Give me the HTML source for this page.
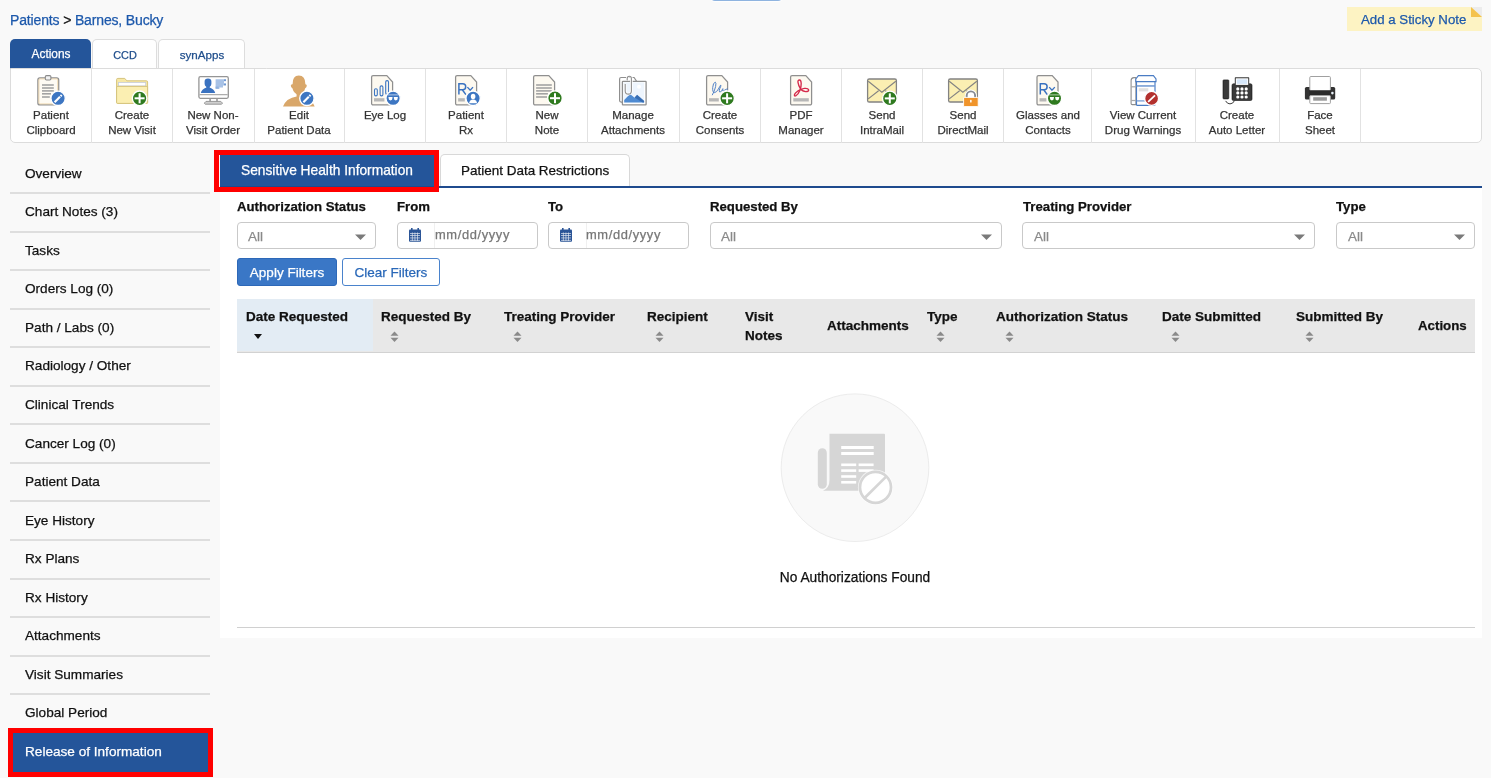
<!DOCTYPE html>
<html><head><meta charset="utf-8"><title>Release of Information</title>
<style>
*{margin:0;padding:0;box-sizing:border-box}
html,body{width:1491px;height:778px;overflow:hidden}
body{background:#f9f9f9;font-family:"Liberation Sans",sans-serif;position:relative;color:#000}
.a{position:absolute}
.t{position:absolute;white-space:nowrap;line-height:1;will-change:transform;-webkit-text-stroke:0.25px currentColor}
</style></head><body>
<div class="a" style="left:709.5px;top:-4px;width:73.0px;height:5.2px;background:#8fb4e0;border-radius:0 0 5px 5px;box-shadow:0 1px 1.5px #fff"></div>
<div class="t" style="left:9.8px;top:13.25px;font-size:14px;letter-spacing:-0.15px;color:#1c58ab">Patients <span style="color:#111">&gt;</span> Barnes, Bucky</div>
<div class="a" style="left:1346.5px;top:7px;width:135.5px;height:24.3px;background:#fdf3c3"></div>
<svg class="a" style="left:1471px;top:7px" width="11" height="10"><polygon points="0,0 11,0 11,10" fill="#ececec"/><polygon points="0,0 11,10 0,10" fill="#f4c24c"/></svg>
<div class="t " style="left:1361.00px;top:12.59px;font-size:13.25px;color:#1c58ab;">Add a Sticky Note</div>
<div class="a" style="left:10px;top:39px;width:81px;height:29.799999999999997px;background:#24559a;border-radius:5px 5px 0 0"></div>
<div class="t" style="left:-99.50px;width:300px;text-align:center;top:48.93px;font-size:11.9px;color:#fff;">Actions</div>
<div class="a" style="left:92px;top:39px;width:64.5px;height:30px;background:#fff;border:1px solid #ddd;border-bottom:none;border-radius:5px 5px 0 0"></div>
<div class="t" style="left:-25.30px;width:300px;text-align:center;top:50.07px;font-size:10.9px;color:#1f4e8c;">CCD</div>
<div class="a" style="left:158px;top:39px;width:86.5px;height:30px;background:#fff;border:1px solid #ddd;border-bottom:none;border-radius:5px 5px 0 0"></div>
<div class="t" style="left:51.50px;width:300px;text-align:center;top:49.18px;font-size:11.6px;color:#1f4e8c;">synApps</div>
<div class="a" style="left:10px;top:67.9px;width:1471.5px;height:75.6px;background:#fff;border:1px solid #dcdcdc;border-radius:0 5px 5px 5px"></div>
<div class="a" style="left:91.0px;top:69px;width:1.0px;height:74px;background:#e2e2e2"></div>
<div class="a" style="left:172.0px;top:69px;width:1.0px;height:74px;background:#e2e2e2"></div>
<div class="a" style="left:253.5px;top:69px;width:1.0px;height:74px;background:#e2e2e2"></div>
<div class="a" style="left:344.1px;top:69px;width:1.0px;height:74px;background:#e2e2e2"></div>
<div class="a" style="left:425.0px;top:69px;width:1.0px;height:74px;background:#e2e2e2"></div>
<div class="a" style="left:506.0px;top:69px;width:1.0px;height:74px;background:#e2e2e2"></div>
<div class="a" style="left:587.0px;top:69px;width:1.0px;height:74px;background:#e2e2e2"></div>
<div class="a" style="left:678.9px;top:69px;width:1.0px;height:74px;background:#e2e2e2"></div>
<div class="a" style="left:759.9px;top:69px;width:1.0px;height:74px;background:#e2e2e2"></div>
<div class="a" style="left:841.0px;top:69px;width:1.0px;height:74px;background:#e2e2e2"></div>
<div class="a" style="left:922.0px;top:69px;width:1.0px;height:74px;background:#e2e2e2"></div>
<div class="a" style="left:1003.0px;top:69px;width:1.0px;height:74px;background:#e2e2e2"></div>
<div class="a" style="left:1091.0px;top:69px;width:1.0px;height:74px;background:#e2e2e2"></div>
<div class="a" style="left:1194.5px;top:69px;width:1.0px;height:74px;background:#e2e2e2"></div>
<div class="a" style="left:1278.8px;top:69px;width:1.0px;height:74px;background:#e2e2e2"></div>
<div class="a" style="left:1359.9px;top:69px;width:1.0px;height:74px;background:#e2e2e2"></div>
<div class="t" style="left:-99.25px;width:300px;text-align:center;top:109.87px;font-size:11.5px;color:#333;">Patient</div>
<div class="t" style="left:-99.25px;width:300px;text-align:center;top:124.97px;font-size:11.5px;color:#333;">Clipboard</div>
<div class="t" style="left:-18.00px;width:300px;text-align:center;top:109.87px;font-size:11.5px;color:#333;">Create</div>
<div class="t" style="left:-18.00px;width:300px;text-align:center;top:124.97px;font-size:11.5px;color:#333;">New Visit</div>
<div class="t" style="left:63.25px;width:300px;text-align:center;top:109.87px;font-size:11.5px;color:#333;">New Non-</div>
<div class="t" style="left:63.25px;width:300px;text-align:center;top:124.97px;font-size:11.5px;color:#333;">Visit Order</div>
<div class="t" style="left:149.30px;width:300px;text-align:center;top:109.87px;font-size:11.5px;color:#333;">Edit</div>
<div class="t" style="left:149.30px;width:300px;text-align:center;top:124.97px;font-size:11.5px;color:#333;">Patient Data</div>
<div class="t" style="left:235.05px;width:300px;text-align:center;top:109.87px;font-size:11.5px;color:#333;">Eye Log</div>
<div class="t" style="left:316.00px;width:300px;text-align:center;top:109.87px;font-size:11.5px;color:#333;">Patient</div>
<div class="t" style="left:316.00px;width:300px;text-align:center;top:124.97px;font-size:11.5px;color:#333;">Rx</div>
<div class="t" style="left:397.00px;width:300px;text-align:center;top:109.87px;font-size:11.5px;color:#333;">New</div>
<div class="t" style="left:397.00px;width:300px;text-align:center;top:124.97px;font-size:11.5px;color:#333;">Note</div>
<div class="t" style="left:483.45px;width:300px;text-align:center;top:109.87px;font-size:11.5px;color:#333;">Manage</div>
<div class="t" style="left:483.45px;width:300px;text-align:center;top:124.97px;font-size:11.5px;color:#333;">Attachments</div>
<div class="t" style="left:569.90px;width:300px;text-align:center;top:109.87px;font-size:11.5px;color:#333;">Create</div>
<div class="t" style="left:569.90px;width:300px;text-align:center;top:124.97px;font-size:11.5px;color:#333;">Consents</div>
<div class="t" style="left:650.95px;width:300px;text-align:center;top:109.87px;font-size:11.5px;color:#333;">PDF</div>
<div class="t" style="left:650.95px;width:300px;text-align:center;top:124.97px;font-size:11.5px;color:#333;">Manager</div>
<div class="t" style="left:732.00px;width:300px;text-align:center;top:109.87px;font-size:11.5px;color:#333;">Send</div>
<div class="t" style="left:732.00px;width:300px;text-align:center;top:124.97px;font-size:11.5px;color:#333;">IntraMail</div>
<div class="t" style="left:813.00px;width:300px;text-align:center;top:109.87px;font-size:11.5px;color:#333;">Send</div>
<div class="t" style="left:813.00px;width:300px;text-align:center;top:124.97px;font-size:11.5px;color:#333;">DirectMail</div>
<div class="t" style="left:897.50px;width:300px;text-align:center;top:109.87px;font-size:11.5px;color:#333;">Glasses and</div>
<div class="t" style="left:897.50px;width:300px;text-align:center;top:124.97px;font-size:11.5px;color:#333;">Contacts</div>
<div class="t" style="left:993.25px;width:300px;text-align:center;top:109.87px;font-size:11.5px;color:#333;">View Current</div>
<div class="t" style="left:993.25px;width:300px;text-align:center;top:124.97px;font-size:11.5px;color:#333;">Drug Warnings</div>
<div class="t" style="left:1087.15px;width:300px;text-align:center;top:109.87px;font-size:11.5px;color:#333;">Create</div>
<div class="t" style="left:1087.15px;width:300px;text-align:center;top:124.97px;font-size:11.5px;color:#333;">Auto Letter</div>
<div class="t" style="left:1169.85px;width:300px;text-align:center;top:109.87px;font-size:11.5px;color:#333;">Face</div>
<div class="t" style="left:1169.85px;width:300px;text-align:center;top:124.97px;font-size:11.5px;color:#333;">Sheet</div>
<div class="a" style="left:10px;top:192.0px;width:200px;height:2.0px;background:#dedede"></div>
<div class="t " style="left:25.00px;top:166.59px;font-size:13.6px;color:#111;">Overview</div>
<div class="a" style="left:10px;top:230.56px;width:200px;height:2.0px;background:#dedede"></div>
<div class="t " style="left:25.00px;top:205.15px;font-size:13.6px;color:#111;">Chart Notes (3)</div>
<div class="a" style="left:10px;top:269.12px;width:200px;height:2.0px;background:#dedede"></div>
<div class="t " style="left:25.00px;top:243.71px;font-size:13.6px;color:#111;">Tasks</div>
<div class="a" style="left:10px;top:307.68px;width:200px;height:2.0px;background:#dedede"></div>
<div class="t " style="left:25.00px;top:282.27px;font-size:13.6px;color:#111;">Orders Log (0)</div>
<div class="a" style="left:10px;top:346.24px;width:200px;height:2.0px;background:#dedede"></div>
<div class="t " style="left:25.00px;top:320.83px;font-size:13.6px;color:#111;">Path / Labs (0)</div>
<div class="a" style="left:10px;top:384.8px;width:200px;height:2.0px;background:#dedede"></div>
<div class="t " style="left:25.00px;top:359.39px;font-size:13.6px;color:#111;">Radiology / Other</div>
<div class="a" style="left:10px;top:423.36px;width:200px;height:2.0px;background:#dedede"></div>
<div class="t " style="left:25.00px;top:397.95px;font-size:13.6px;color:#111;">Clinical Trends</div>
<div class="a" style="left:10px;top:461.92px;width:200px;height:2.0px;background:#dedede"></div>
<div class="t " style="left:25.00px;top:436.51px;font-size:13.6px;color:#111;">Cancer Log (0)</div>
<div class="a" style="left:10px;top:500.48px;width:200px;height:2.0px;background:#dedede"></div>
<div class="t " style="left:25.00px;top:475.07px;font-size:13.6px;color:#111;">Patient Data</div>
<div class="a" style="left:10px;top:539.04px;width:200px;height:2.0px;background:#dedede"></div>
<div class="t " style="left:25.00px;top:513.63px;font-size:13.6px;color:#111;">Eye History</div>
<div class="a" style="left:10px;top:577.6px;width:200px;height:2.0px;background:#dedede"></div>
<div class="t " style="left:25.00px;top:552.19px;font-size:13.6px;color:#111;">Rx Plans</div>
<div class="a" style="left:10px;top:616.16px;width:200px;height:2.0px;background:#dedede"></div>
<div class="t " style="left:25.00px;top:590.75px;font-size:13.6px;color:#111;">Rx History</div>
<div class="a" style="left:10px;top:654.72px;width:200px;height:2.0px;background:#dedede"></div>
<div class="t " style="left:25.00px;top:629.31px;font-size:13.6px;color:#111;">Attachments</div>
<div class="a" style="left:10px;top:693.28px;width:200px;height:2.0px;background:#dedede"></div>
<div class="t " style="left:25.00px;top:667.87px;font-size:13.6px;color:#111;">Visit Summaries</div>
<div class="a" style="left:10px;top:731.84px;width:200px;height:2.0px;background:#dedede"></div>
<div class="t " style="left:25.00px;top:706.43px;font-size:13.6px;color:#111;">Global Period</div>
<div class="a" style="left:10px;top:732.8px;width:200px;height:39.0px;background:#24559a"></div>
<div class="t " style="left:25.00px;top:744.99px;font-size:13.6px;color:#fff;">Release of Information</div>
<div class="a" style="left:7.7px;top:727.5px;width:204.9px;height:49.799999999999955px;border:5px solid #f00"></div>
<div class="a" style="left:220px;top:186.5px;width:1262px;height:451.5px;background:#fff"></div>
<div class="a" style="left:220px;top:155.4px;width:214.5px;height:31.599999999999994px;background:#24559a"></div>
<div class="t " style="left:241.00px;top:164.06px;font-size:13.75px;color:#fff;">Sensitive Health Information</div>
<div class="a" style="left:440px;top:154.3px;width:190px;height:32.69999999999999px;background:#fff;border:1px solid #d8d8d8;border-bottom:none;border-radius:5px 5px 0 0"></div>
<div class="t " style="left:460.50px;top:163.89px;font-size:13.48px;color:#111;">Patient Data Restrictions</div>
<div class="a" style="left:220px;top:185.5px;width:1262px;height:2.0px;background:#1f4b8e"></div>
<div class="a" style="left:214.4px;top:150.4px;width:224.9px;height:41.900000000000006px;border:5px solid #f00"></div>
<div class="t " style="left:237.00px;top:200.23px;font-size:13.2px;color:#111;font-weight:bold;">Authorization Status</div>
<div class="t " style="left:397.00px;top:200.23px;font-size:13.2px;color:#111;font-weight:bold;">From</div>
<div class="t " style="left:548.00px;top:200.23px;font-size:13.2px;color:#111;font-weight:bold;">To</div>
<div class="t " style="left:710.00px;top:200.23px;font-size:13.2px;color:#111;font-weight:bold;">Requested By</div>
<div class="t " style="left:1023.00px;top:200.23px;font-size:13.2px;color:#111;font-weight:bold;">Treating Provider</div>
<div class="t " style="left:1336.00px;top:200.23px;font-size:13.2px;color:#111;font-weight:bold;">Type</div>
<div class="a" style="left:237px;top:221.5px;width:139.3px;height:27.5px;background:#fff;border:1px solid #c9c9c9;border-radius:4px"></div>
<div class="t " style="left:248.30px;top:230.07px;font-size:13.5px;color:#8a8a8a;">All</div>
<svg class="a" style="left:355.3px;top:234px" width="11" height="6"><polygon points="0,0.5 11,0.5 5.5,6" fill="#7a7a7a"/></svg>
<div class="a" style="left:709.5px;top:221.5px;width:292.9px;height:27.5px;background:#fff;border:1px solid #c9c9c9;border-radius:4px"></div>
<div class="t " style="left:720.80px;top:230.07px;font-size:13.5px;color:#8a8a8a;">All</div>
<svg class="a" style="left:981.4px;top:234px" width="11" height="6"><polygon points="0,0.5 11,0.5 5.5,6" fill="#7a7a7a"/></svg>
<div class="a" style="left:1022.4px;top:221.5px;width:293.0000000000001px;height:27.5px;background:#fff;border:1px solid #c9c9c9;border-radius:4px"></div>
<div class="t " style="left:1033.70px;top:230.07px;font-size:13.5px;color:#8a8a8a;">All</div>
<svg class="a" style="left:1294.4px;top:234px" width="11" height="6"><polygon points="0,0.5 11,0.5 5.5,6" fill="#7a7a7a"/></svg>
<div class="a" style="left:1336.3px;top:221.5px;width:138.29999999999995px;height:27.5px;background:#fff;border:1px solid #c9c9c9;border-radius:4px"></div>
<div class="t " style="left:1347.60px;top:230.07px;font-size:13.5px;color:#8a8a8a;">All</div>
<svg class="a" style="left:1453.6px;top:234px" width="11" height="6"><polygon points="0,0.5 11,0.5 5.5,6" fill="#7a7a7a"/></svg>
<div class="a" style="left:397px;top:221.5px;width:140.89999999999998px;height:27.30000000000001px;background:#fff;border:1px solid #c9c9c9;border-radius:4px"></div>
<div class="a" style="left:434.3px;top:222.5px;width:1.0px;height:25.30000000000001px;background:#f0f0f0"></div>
<svg class="a" style="left:409px;top:228px" width="12" height="14" viewBox="0 0 12 14"><rect x="0" y="1.5" width="12" height="12.3" rx="1" fill="#2b5597"/><rect x="2" y="0" width="1.6" height="3" fill="#2b5597"/><rect x="8.4" y="0" width="1.6" height="3" fill="#2b5597"/><g fill="#fff" opacity="0.85"><rect x="1" y="5" width="10" height="0.7"/><rect x="1" y="7.3" width="10" height="0.7"/><rect x="1" y="9.6" width="10" height="0.7"/><rect x="1" y="11.9" width="10" height="0.7"/><rect x="2.9" y="4.5" width="0.7" height="8.5"/><rect x="5.6" y="4.5" width="0.7" height="8.5"/><rect x="8.3" y="4.5" width="0.7" height="8.5"/></g></svg>
<div class="t " style="left:435.00px;top:229.28px;font-size:12.9px;color:#777;letter-spacing:0.62px">mm/dd/yyyy</div>
<div class="a" style="left:548.2px;top:221.5px;width:141.0px;height:27.30000000000001px;background:#fff;border:1px solid #c9c9c9;border-radius:4px"></div>
<div class="a" style="left:585.5px;top:222.5px;width:1.0px;height:25.30000000000001px;background:#f0f0f0"></div>
<svg class="a" style="left:560.2px;top:228px" width="12" height="14" viewBox="0 0 12 14"><rect x="0" y="1.5" width="12" height="12.3" rx="1" fill="#2b5597"/><rect x="2" y="0" width="1.6" height="3" fill="#2b5597"/><rect x="8.4" y="0" width="1.6" height="3" fill="#2b5597"/><g fill="#fff" opacity="0.85"><rect x="1" y="5" width="10" height="0.7"/><rect x="1" y="7.3" width="10" height="0.7"/><rect x="1" y="9.6" width="10" height="0.7"/><rect x="1" y="11.9" width="10" height="0.7"/><rect x="2.9" y="4.5" width="0.7" height="8.5"/><rect x="5.6" y="4.5" width="0.7" height="8.5"/><rect x="8.3" y="4.5" width="0.7" height="8.5"/></g></svg>
<div class="t " style="left:586.20px;top:229.28px;font-size:12.9px;color:#777;letter-spacing:0.62px">mm/dd/yyyy</div>
<div class="a" style="left:237px;top:257.6px;width:100px;height:28.19999999999999px;background:#3a77c6;border:1px solid #2d68b8;border-radius:3px"></div>
<div class="t" style="left:137.00px;width:300px;text-align:center;top:265.77px;font-size:13.5px;color:#fff;">Apply Filters</div>
<div class="a" style="left:342.2px;top:257.6px;width:97.40000000000003px;height:28.19999999999999px;background:#fff;border:1.3px solid #4a83cc;border-radius:3px"></div>
<div class="t" style="left:241.00px;width:300px;text-align:center;top:265.77px;font-size:13.5px;color:#2a68b8;">Clear Filters</div>
<div class="a" style="left:237px;top:299px;width:1238px;height:54px;background:#e8e8e8;border-bottom:1.6px solid #d2d2d2"></div>
<div class="a" style="left:237px;top:299px;width:135.5px;height:52.39999999999998px;background:#e3ecf4"></div>
<div class="t " style="left:245.70px;top:310.37px;font-size:13.5px;color:#111;font-weight:bold;">Date Requested</div>
<div class="t " style="left:381.30px;top:310.37px;font-size:13.5px;color:#111;font-weight:bold;">Requested By</div>
<div class="t " style="left:504.00px;top:310.37px;font-size:13.5px;color:#111;font-weight:bold;">Treating Provider</div>
<div class="t " style="left:646.60px;top:310.37px;font-size:13.5px;color:#111;font-weight:bold;">Recipient</div>
<div class="t " style="left:996.00px;top:310.37px;font-size:13.5px;color:#111;font-weight:bold;">Authorization Status</div>
<div class="t " style="left:1162.00px;top:310.37px;font-size:13.5px;color:#111;font-weight:bold;">Date Submitted</div>
<div class="t " style="left:1296.00px;top:310.37px;font-size:13.5px;color:#111;font-weight:bold;">Submitted By</div>
<div class="t " style="left:927.00px;top:310.37px;font-size:13.5px;color:#111;font-weight:bold;">Type</div>
<div class="t " style="left:745.00px;top:310.37px;font-size:13.5px;color:#111;font-weight:bold;">Visit</div>
<div class="t " style="left:745.00px;top:328.87px;font-size:13.5px;color:#111;font-weight:bold;">Notes</div>
<div class="t " style="left:826.50px;top:319.07px;font-size:13.5px;color:#111;font-weight:bold;">Attachments</div>
<div class="t " style="left:1418.40px;top:319.24px;font-size:13.3px;color:#111;font-weight:bold;">Actions</div>
<svg class="a" style="left:254px;top:334px" width="8" height="5"><polygon points="0,0 8,0 4,5" fill="#111"/></svg>
<svg class="a" style="left:390px;top:331px" width="9" height="12"><polygon points="0.5,4.8 8.5,4.8 4.5,0.5" fill="#8a8a8a"/><polygon points="0.5,6.7 8.5,6.7 4.5,11" fill="#8a8a8a"/></svg>
<svg class="a" style="left:512.5px;top:331px" width="9" height="12"><polygon points="0.5,4.8 8.5,4.8 4.5,0.5" fill="#8a8a8a"/><polygon points="0.5,6.7 8.5,6.7 4.5,11" fill="#8a8a8a"/></svg>
<svg class="a" style="left:655px;top:331px" width="9" height="12"><polygon points="0.5,4.8 8.5,4.8 4.5,0.5" fill="#8a8a8a"/><polygon points="0.5,6.7 8.5,6.7 4.5,11" fill="#8a8a8a"/></svg>
<svg class="a" style="left:936px;top:331px" width="9" height="12"><polygon points="0.5,4.8 8.5,4.8 4.5,0.5" fill="#8a8a8a"/><polygon points="0.5,6.7 8.5,6.7 4.5,11" fill="#8a8a8a"/></svg>
<svg class="a" style="left:1005px;top:331px" width="9" height="12"><polygon points="0.5,4.8 8.5,4.8 4.5,0.5" fill="#8a8a8a"/><polygon points="0.5,6.7 8.5,6.7 4.5,11" fill="#8a8a8a"/></svg>
<svg class="a" style="left:1171px;top:331px" width="9" height="12"><polygon points="0.5,4.8 8.5,4.8 4.5,0.5" fill="#8a8a8a"/><polygon points="0.5,6.7 8.5,6.7 4.5,11" fill="#8a8a8a"/></svg>
<svg class="a" style="left:1305px;top:331px" width="9" height="12"><polygon points="0.5,4.8 8.5,4.8 4.5,0.5" fill="#8a8a8a"/><polygon points="0.5,6.7 8.5,6.7 4.5,11" fill="#8a8a8a"/></svg>
<svg class="a" style="left:780px;top:393px" width="150" height="150" viewBox="780 393 150 150"><circle cx="855" cy="467.7" r="73.8" fill="#f9f9f9" stroke="#ececec" stroke-width="1"/><rect x="817.8" y="448.2" width="9" height="40.5" rx="4.5" fill="#d6d6d6"/><path d="M829.5 433.8 H884 a1 1 0 0 1 1 1 V490.8 H823 Q829.5 488 829.5 480 Z" fill="#d6d6d6"/><g fill="#fff"><rect x="841.2" y="446" width="32.5" height="3"/><rect x="841.2" y="452" width="32.5" height="3"/><rect x="841.2" y="463.5" width="15" height="2.6"/><rect x="858.6" y="463.5" width="15" height="2.6"/><rect x="841.2" y="469.3" width="15" height="2.6"/><rect x="858.6" y="469.3" width="15" height="2.6"/><rect x="841.2" y="475.2" width="15" height="2.6"/><rect x="841.2" y="481" width="15" height="2.6"/></g><circle cx="875.5" cy="487.3" r="17.6" fill="#fff" opacity="0.7"/><circle cx="875.5" cy="487.3" r="16.6" fill="#fff"/><circle cx="875.5" cy="487.3" r="15.5" fill="none" stroke="#d6d6d6" stroke-width="2.7"/><line x1="864.6" y1="498" x2="886.4" y2="476.4" stroke="#d6d6d6" stroke-width="2.7"/></svg>
<div class="t" style="left:705.00px;width:300px;text-align:center;top:570.97px;font-size:13.74px;color:#111;">No Authorizations Found</div>
<div class="a" style="left:237px;top:627px;width:1238px;height:1px;background:#d0d0d0"></div>
<svg class="a" style="left:0;top:0;pointer-events:none" width="1491" height="150" viewBox="0 0 1491 150">
<defs>
<g id="plus"><circle r="7.3" fill="#2f7a1f" stroke="#fff" stroke-width="1.4"/><rect x="-5" y="-1" width="10" height="2" fill="#fff"/><rect x="-1" y="-5" width="2" height="10" fill="#fff"/></g>
<g id="pencil"><circle r="7.2" fill="#3d76c2" stroke="#fff" stroke-width="1.4"/><path d="M-3.5 3.9 L1.9 -1.5" stroke="#fff" stroke-width="2.1"/><path d="M2.5 -2.1 L3.6 -3.2" stroke="#fff" stroke-width="2.1"/></g>
<g id="glasses"><rect x="-5.6" y="-3.9" width="11.2" height="0.8" fill="#fff" opacity="0.75"/><path d="M-4.6 -1.5 h4 v0.9 q0 2.6 -2 2.6 q-2 0 -2 -2.6 z M0.7 -1.5 h4 v0.9 q0 2.6 -2 2.6 q-2 0 -2 -2.6 z" fill="#fff"/></g>
<path id="doc" d="M0.6 2.1 a1.5 1.5 0 0 1 1.5 -1.5 h13.7 l5.8 6.4 v21.4 a1.5 1.5 0 0 1 -1.5 1.5 h-18 a1.5 1.5 0 0 1 -1.5 -1.5 z" fill="#fdf9f0" stroke="#8f8f8f" stroke-width="1.25"/>
</defs>

<!-- 1 Patient Clipboard -->
<rect x="37.9" y="77.9" width="20.8" height="27" rx="2" fill="#fefbf3" stroke="#8f8f8f" stroke-width="1.3"/>
<rect x="38.9" y="78.9" width="18.8" height="25" rx="1.2" fill="none" stroke="#edd3a6" stroke-width="0.8"/>
<rect x="45.3" y="75.6" width="5.6" height="4.4" rx="1.2" fill="#f2f2f2" stroke="#8a8a8a" stroke-width="1.1"/>
<g fill="#a3a3a3"><rect x="42" y="84.2" width="11.8" height="1.6"/><rect x="42" y="87.2" width="11.8" height="1.6"/><rect x="42" y="90.1" width="11.8" height="1.6"/><rect x="42" y="93" width="9" height="1.6"/><rect x="42" y="96.2" width="7.8" height="1.6"/></g>
<use href="#pencil" x="58.1" y="98.3"/>

<!-- 2 Create New Visit -->
<path d="M116.6 79.6 a1.2 1.2 0 0 1 1.2 -1.2 h7 l2 2.4 h19.6 a1.2 1.2 0 0 1 1.2 1.2 v20.4 a1 1 0 0 1 -1 1 h-29 a1 1 0 0 1 -1 -1 z" fill="#f7e8a6" stroke="#d6c47e" stroke-width="1"/>
<rect x="118.4" y="82.4" width="27.3" height="3.5" fill="#fff" stroke="#c5ccd8" stroke-width="0.8"/>
<path d="M116.6 86.4 h31 v16 a1 1 0 0 1 -1 1 h-29 a1 1 0 0 1 -1 -1 z" fill="#fbefb2" stroke="#d6c47e" stroke-width="1"/>
<use href="#plus" x="139.6" y="98.3"/>

<!-- 3 New Non-Visit Order -->
<rect x="198.9" y="76.7" width="29.4" height="21.6" rx="1.5" fill="#fff" stroke="#959595" stroke-width="1.3"/>
<rect x="199.6" y="94.2" width="28" height="1" fill="#9a9a9a"/>
<path d="M204.6 81.6 q0 -3.1 3.4 -3.1 q3.4 0 3.4 3.1 v2.2 q0 2 -1.6 3 l-0.2 0.8 q4.8 1.6 5.6 5.4 h-14.4 q0.8 -3.8 5.6 -5.4 l-0.2 -0.8 q-1.6 -1 -1.6 -3 z" fill="#3a72c0"/>
<path d="M215.6 79.2 h10.4 v2 h-2 v2.2 h2 v2 h-3 v2 h-3.6 v1.6 h-3.8 z" fill="#a8c2e6"/>
<rect x="224" y="79.4" width="2" height="1.6" fill="#6f98d2"/><rect x="224" y="83.6" width="2" height="1.6" fill="#6f98d2"/>
<rect x="215.6" y="86.6" width="3" height="1.8" fill="#8fb0dd"/>
<rect x="209.3" y="98.3" width="1.6" height="3.2" fill="#9a9a9a"/><rect x="216.2" y="98.3" width="1.6" height="3.2" fill="#9a9a9a"/>
<path d="M206 101.4 h14.8 l1.6 1.6 v0.4 l-0.8 0.8 h-16.4 l-0.8 -0.8 v-0.4 z" fill="#cfcfcf" stroke="#8f8f8f" stroke-width="0.9"/>

<!-- 4 Edit Patient Data -->
<path d="M292.6 84.2 q-0.2 -8.6 6.2 -8.7 q6.6 0 6.6 8.7 q1.5 0 1.4 1.6 q-0.2 1.6 -1.6 2.4 q-0.6 2.6 -2.4 4.6 q-1.8 2 -4 2.2 q-2.2 -0.2 -4 -2.2 q-1.8 -2 -2.4 -4.6 q-1.4 -0.8 -1.6 -2.4 q-0.1 -1.6 1.4 -1.6 z" fill="#d9a76a"/>
<path d="M296.6 93 h4.6 v3.6 q10 1.4 13.5 9.9 h-31.7 q3.6 -8.5 13.6 -9.9 z" fill="#d9a76a"/>
<use href="#pencil" x="306.9" y="98.3"/>

<!-- 5 Eye Log -->
<use href="#doc" x="371" y="75"/>
<g fill="none" stroke="#3d76c2" stroke-width="1.1"><rect x="374.5" y="88.7" width="2.8" height="7.2" rx="1.3"/><rect x="380.1" y="85.9" width="2.8" height="10" rx="1.3"/><rect x="385.7" y="80.6" width="2.8" height="13.6" rx="1.3"/></g>
<rect x="374" y="98.2" width="10.4" height="3.3" fill="#b7b7b7"/>
<circle cx="393.1" cy="98.3" r="7.2" fill="#3d76c2" stroke="#fff" stroke-width="1.4"/>
<use href="#glasses" x="393.1" y="98.4"/>

<!-- 6 Patient Rx -->
<use href="#doc" x="455" y="75"/>
<path d="M458.9 94.6 v-10.8 h3.8 q3 0 3 3 q0 3 -3 3 h-3.8 M462.3 89.8 l3.6 4.8" fill="none" stroke="#3a72c0" stroke-width="1.5"/>
<path d="M467.4 87.1 l2.8 3.2 l2.8 -3.2" fill="none" stroke="#3a72c0" stroke-width="1.3"/>
<rect x="458.1" y="98.2" width="6.7" height="3.3" fill="#b7b7b7"/>
<circle cx="473.1" cy="98.3" r="7.2" fill="#3d76c2" stroke="#fff" stroke-width="1.4"/>
<ellipse cx="473.1" cy="96.4" rx="2.3" ry="2.7" fill="#fff"/>
<path d="M469 103.2 q0.4 -3 3 -3.6 h2.2 q2.6 0.6 3 3.6 z" fill="#fff"/>

<!-- 7 New Note -->
<use href="#doc" x="533" y="75"/>
<g fill="#a3a3a3"><rect x="536.1" y="84.2" width="15.7" height="1.6"/><rect x="536.1" y="87.2" width="15.7" height="1.6"/><rect x="536.1" y="90.1" width="15.7" height="1.6"/><rect x="536.1" y="93" width="11.8" height="1.6"/><rect x="536.1" y="96.2" width="10.9" height="1.6"/></g>
<use href="#plus" x="555" y="98.2"/>

<!-- 8 Manage Attachments -->
<path d="M619.6 79 a1.5 1.5 0 0 1 1.5 -1.5 h13 l2.4 3.6 v21 h-15.4 a1.5 1.5 0 0 1 -1.5 -1.5 z" fill="#fff" stroke="#8f8f8f" stroke-width="1.2"/>
<rect x="622.4" y="81.3" width="23.7" height="23.5" rx="0.6" fill="#fff" stroke="#8f8f8f" stroke-width="1.3"/>
<rect x="623.6" y="82.5" width="20.5" height="20" fill="#eef5fd"/>
<circle cx="639" cy="86.8" r="2" fill="#fff"/>
<path d="M624.2 102.4 v-2.5 l5.8 -5.9 l4.6 3.8 l2.5 -2.7 l7 6.1 v1.2 z" fill="#4f8bd2"/>
<path d="M634.6 97.4 l2.5 -2.7 l7 6.1 v1.6 h-1.5 z" fill="#2f65ad" opacity="0.8"/>
<path d="M625.2 84 v7 a3.1 3.1 0 0 0 6.2 0 v-12.6 a2.1 2.1 0 0 0 -4.2 0 v2" fill="none" stroke="#fff" stroke-width="2.6"/>
<path d="M625.2 84 v7 a3.1 3.1 0 0 0 6.2 0 v-12.6 a2.1 2.1 0 0 0 -4.2 0 v2" fill="none" stroke="#8f8f8f" stroke-width="1.1"/>

<!-- 9 Create Consents -->
<use href="#doc" x="706" y="75"/>
<path d="M712.2 95.2 Q714.6 91 715.6 86.6 Q716.4 82.2 715.3 82.2 Q713.1 82.4 712.7 87.6 Q712.4 92.6 714.6 92.6 Q716.6 92.4 718.4 89 Q719.8 86.4 720.4 85.4 Q721.2 84.6 720.8 86.2 Q719.4 89.2 719.2 90.8 Q719.2 92.6 720.8 91.6 Q722.2 90.6 722.9 89.4 Q723.3 88.4 722.7 88.8 Q722 89.6 722.6 90.6 Q723.2 91.2 724.6 90.2 Q726 89.2 727.8 88.8" fill="none" stroke="#4a7cc4" stroke-width="0.95"/>
<rect x="709" y="98.2" width="9.8" height="3.3" fill="#b7b7b7"/>
<use href="#plus" x="727.1" y="98.3"/>

<!-- 10 PDF Manager -->
<use href="#doc" x="790" y="75"/>
<path d="M799.6 80 q-2 0 -1.6 2.4 q0.4 3 2.4 6.2 q2.2 3 5.4 3 q3.2 0 2.8 -1.8 q-0.5 -1.8 -4.2 -1.4 q-3.6 0.4 -6.6 2.6 q-3.2 2.4 -3.4 3.9 q-0.2 1.6 1.6 0.8 q2 -1 3.6 -4.6 q1.8 -4 1.6 -7.6 q-0.2 -3.5 -1.6 -3.5 z" fill="none" stroke="#d5294a" stroke-width="1.35"/>
<rect x="793.3" y="98.2" width="15.5" height="3.3" fill="#b7b7b7"/>

<!-- 11 Send IntraMail -->
<rect x="867.6" y="79" width="28.8" height="23" rx="1.6" fill="#fbefb2" stroke="#838383" stroke-width="1.3"/>
<path d="M868.2 81.3 l13.7 11 l13.9 -11 M868.2 98.9 l10.4 -8.2 M895.8 98.9 l-10.4 -8.2" fill="none" stroke="#838383" stroke-width="1.15"/>
<use href="#plus" x="889.8" y="98.4"/>

<!-- 12 Send DirectMail -->
<rect x="948.6" y="79" width="28.8" height="23" rx="1.6" fill="#fbefb2" stroke="#838383" stroke-width="1.3"/>
<path d="M949.2 81.3 l13.7 11 l13.9 -11 M949.2 98.9 l10.4 -8.2 M976.8 98.9 l-10.4 -8.2" fill="none" stroke="#838383" stroke-width="1.15"/>
<path d="M966.7 98 v-2.4 a4.2 4.2 0 0 1 8.4 0 v2.4 z" fill="#fff" stroke="#fff" stroke-width="3.6"/>
<path d="M966.7 98 v-2.4 a4.2 4.2 0 0 1 8.4 0 v2.4" fill="none" stroke="#858a92" stroke-width="1.9"/>
<rect x="963.6" y="97.4" width="14.6" height="9.2" rx="0.6" fill="#f0942a" stroke="#fff" stroke-width="0.9"/>
<rect x="970.1" y="99.8" width="1.5" height="2.8" rx="0.7" fill="#fff"/>

<!-- 13 Glasses and Contacts -->
<use href="#doc" x="1036.4" y="75"/>
<path d="M1040.3 94.6 v-10.8 h3.8 q3 0 3 3 q0 3 -3 3 h-3.8 M1043.7 89.8 l3.6 4.8" fill="none" stroke="#3a72c0" stroke-width="1.5"/>
<path d="M1049.2 87.1 l2.8 3.2 l2.8 -3.2" fill="none" stroke="#3a72c0" stroke-width="1.3"/>
<rect x="1039.5" y="98.2" width="6.9" height="3.3" fill="#b7b7b7"/>
<circle cx="1054.5" cy="98.3" r="7.2" fill="#2f7a1f" stroke="#fff" stroke-width="1.4"/>
<use href="#glasses" x="1054.5" y="98.4"/>

<!-- 14 View Current Drug Warnings -->
<path d="M1131.1 80.6 q0 -2.8 2.8 -3 h2 v27 h-3.6 a1.2 1.2 0 0 1 -1.2 -1.2 z" fill="#fff" stroke="#8f8f8f" stroke-width="1.1"/>
<rect x="1131.1" y="86.2" width="4.8" height="1.2" fill="#aaa"/><rect x="1131.1" y="99.9" width="4.8" height="1.2" fill="#aaa"/>
<path d="M1135.8 79 l2.6 -3.4 h15 l2.6 3.4 v2.6 h-20.2 z" fill="#fff" stroke="#4a7cc4" stroke-width="1.15"/>
<path d="M1136.5 81.6 h18.5 v22.8 a1 1 0 0 1 -1 1 h-16.5 a1 1 0 0 1 -1 -1 z" fill="#fff" stroke="#4a7cc4" stroke-width="1.15"/>
<rect x="1136.5" y="85.2" width="18.5" height="1.5" fill="#6f98d2"/>
<rect x="1136.5" y="100.3" width="18.5" height="1.2" fill="#6f98d2"/>
<rect x="1138.8" y="88.2" width="9.5" height="3.2" fill="#e0e0e0"/>
<circle cx="1151.6" cy="98.4" r="7" fill="#b3302e" stroke="#fff" stroke-width="1.4"/>
<path d="M1148.1 101.9 l6.9 -6.5" stroke="#fff" stroke-width="1.8"/>

<!-- 15 Create Auto Letter -->
<rect x="1223" y="79.9" width="5.8" height="19" rx="0.8" fill="#3a3a3a" stroke="#111" stroke-width="0.6"/>
<rect x="1232" y="83.8" width="20" height="16.7" rx="1.5" fill="#3a3a3a" stroke="#111" stroke-width="0.6"/>
<rect x="1234.8" y="77.3" width="14.4" height="8.1" rx="0.6" fill="#3a3a3a"/>
<rect x="1235.8" y="78.3" width="12.4" height="6.6" fill="#fff"/>
<rect x="1236.8" y="79.3" width="10.4" height="4.6" fill="#d6e7fa"/>
<g fill="#fff"><circle cx="1237.8" cy="88.9" r="1.6"/><circle cx="1242" cy="88.9" r="1.6"/><circle cx="1246.2" cy="88.9" r="1.6"/><circle cx="1237.8" cy="92.9" r="1.6"/><circle cx="1242" cy="92.9" r="1.6"/><circle cx="1246.2" cy="92.9" r="1.6"/><circle cx="1237.8" cy="97" r="1.6"/><circle cx="1242" cy="97" r="1.6"/><circle cx="1246.2" cy="97" r="1.6"/></g>
<path d="M1225.6 100.9 q1.6 3 4.4 3 q3 0 4.6 -3.4" fill="none" stroke="#3a3a3a" stroke-width="1"/>

<!-- 16 Face Sheet -->
<rect x="1304.9" y="87" width="30.3" height="12.5" rx="1.6" fill="#333"/>
<rect x="1309.8" y="76.5" width="20.6" height="14" rx="1" fill="#fff" stroke="#a0a0a0" stroke-width="1"/>
<rect x="1309.3" y="90.4" width="21.6" height="5" fill="#2a2a2a"/>
<circle cx="1332.4" cy="93.1" r="1.3" fill="#eaf3fb"/>
<rect x="1309.8" y="95.6" width="20.6" height="8" rx="0.8" fill="#fff" stroke="#a0a0a0" stroke-width="1"/>
<rect x="1313.2" y="97.2" width="13.7" height="3.5" fill="#9a9a9a"/>
</svg>

</body></html>
